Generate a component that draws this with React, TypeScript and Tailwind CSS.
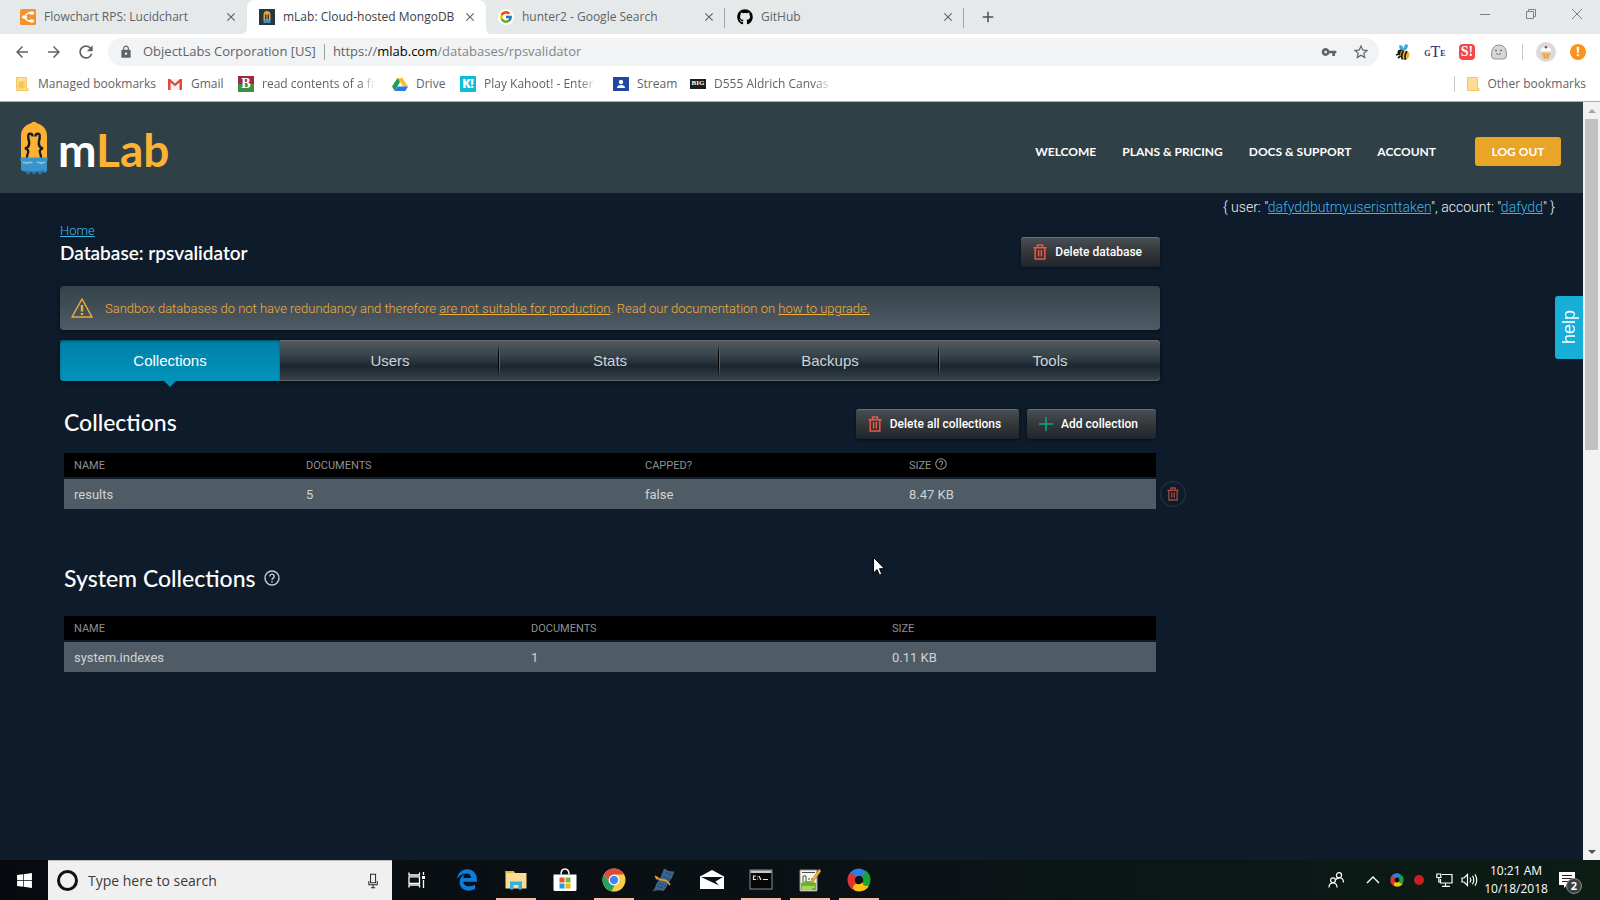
import React from "react";
import { FaGithub, FaWindows, FaEdgeLegacy } from "react-icons/fa6";
import { FcGoogle } from "react-icons/fc";
import {
  MdArrowBack,
  MdArrowForward,
  MdClose,
  MdAdd,
  MdLock,
  MdRefresh,
  MdStarBorder,
  MdVpnKey,
} from "react-icons/md";

/* ---------- Icons ---------- */

function TrashIcon({ className }: { className?: string }) {
  return (
    <svg viewBox="0 0 14 16" className={className} fill="none" stroke="currentColor" strokeWidth="1.5" aria-hidden="true">
      <path d="M4.5 3.5V1h5v2.5M.5 3.7h13M2.2 3.7V15h9.600V3.7M5.6 6v6.5M8.4 6v6.5" />
    </svg>
  );
}

function PlusIcon() {
  return (
    <svg viewBox="0 0 14 14" className="h-3.5 w-3.5" stroke="#0fa58a" strokeWidth="1.5" aria-hidden="true">
      <path d="M7 0v14M0 7h14" />
    </svg>
  );
}

function HelpCircle({ className }: { className?: string }) {
  return (
    <svg viewBox="0 0 16 16" className={className} fill="none" stroke="currentColor" strokeWidth="1.4" aria-hidden="true">
      <circle cx="8" cy="8" r="7" />
      <path d="M5.8 6.4a2.2 2.2 0 1 1 3.4 1.8c-.8.5-1.2.9-1.2 1.7M8 11v1.4" />
    </svg>
  );
}

function LucidIcon() {
  return (
    <svg viewBox="0 0 16 16" className="h-4 w-4" aria-hidden="true">
      <rect width="16" height="16" rx="1.5" fill="#f5922f" />
      <path d="M13 4H8.500L5.500 6v4l3 2H13" fill="none" stroke="#fff" strokeWidth="1.4" />
      <rect x="9.500" y="2.6" width="4.500" height="2.8" rx="1" fill="#fff" />
      <rect x="9.500" y="10.6" width="4.500" height="2.8" rx="1" fill="#fff" />
      <rect x="2" y="6.6" width="5" height="2.8" rx="1" fill="#fff" />
    </svg>
  );
}

function Mascot({ className }: { className?: string }) {
  return (
    <svg viewBox="0 0 28 54" className={className} aria-hidden="true">
      <path d="M1 37V15C1 8 5 4 11 2.200Q14-.5 17 2.200C23 4 27 8 27 15v22z" fill="#fdb234" />
      <path d="M.4 36.500h27.200v3.500H27v10q-2 3-4 .5l-3 3-3-3-3 3-3-3-3 3-3-3.500q-2 .5-4-1V40H.4z" fill="#3a93c9" />
      <path d="M2 51q3-2 5.500-1l6.500.5 6-.5 6.500-1-3.500 2-3 2.500-3-3-3 3-3-3-3 3-3-3.500z" fill="#2478ae" />
      <path d="M2.500 41.500h3l1 .8 2-.8h4M17 41.500h3l1 .8 2-.8h2.500" stroke="#8ec6e8" strokeWidth="1.500" fill="none" />
      <path
        d="M12.600 15.500q0-2.800-2.300-2.800T8.300 15q-.2 2.500.7 5.200.8 4-1.200 6-1.300 1.100-3 1.100 2.200.2 3.200 2 .8 2-.5 4.200-.6 1.200-.4 3M15.400 15.500q0-2.800 2.300-2.800t2 2.300q.2 2.500-.7 5.200-.8 4 1.200 6 1.300 1.100 3 1.100-2.200.2-3.200 2-.8 2 .5 4.200.6 1.200.4 3"
        fill="none"
        stroke="#161d2c"
        strokeWidth="2.400"
      />
    </svg>
  );
}

function MlabFavicon() {
  return (
    <svg viewBox="0 0 16 16" className="h-4 w-4" aria-hidden="true">
      <rect width="16" height="16" fill="#263840" />
      <path d="M4.500 11V6q0-4 3.500-4t3.500 4v5z" fill="#e8a63a" />
      <path d="M6.800 10.500V5.500M9.200 10.500V5.500" stroke="#1a222c" strokeWidth="1.200" />
      <path d="M4.500 11h7v2.500l-1.700.8-1.800-.8-1.800.8-1.700-.8z" fill="#3a93c9" />
    </svg>
  );
}

function FolderMark({ badge }: { badge?: boolean }) {
  return (
    <svg viewBox="0 0 16 16" className="h-4 w-4" aria-hidden="true">
      <path d="M2.500 1.500h10v11h1.500v2H2.500z" fill="#fddc93" stroke="#f7c65b" />
      {badge && <path d="M5 6h5v6H5zM6.700 6v6M8.400 6v6M5 8h5M5 10h5" fill="none" stroke="#f2bd4b" strokeWidth=".9" />}
    </svg>
  );
}

function GmailIcon() {
  return (
    <svg viewBox="0 0 16 16" className="h-4 w-4" aria-hidden="true">
      <rect x="1" y="3" width="14" height="11" fill="#f3f0ee" />
      <path d="M1 3h2l5 4.500L13 3h2v11h-2.500V6.500L8 10.200 3.500 6.500V14H1z" fill="#dd4b39" />
    </svg>
  );
}

function DriveIcon() {
  return (
    <svg viewBox="0 0 16 16" className="h-4 w-4" aria-hidden="true">
      <path d="M5.500 2h5L16 10.500h-5z" fill="#fbc02d" />
      <path d="M5.500 2 8 6l-5.300 9L0 10.500z" fill="#1e9e5a" />
      <path d="M5.500 10.500H16L13.300 15H2.700z" fill="#2f77e0" />
    </svg>
  );
}

function LetterTile({ label, className }: { label: string; className: string }) {
  return <span className={`flex h-4 w-4 items-center justify-center overflow-hidden text-white ${className}`}>{label}</span>;
}

function StreamIcon() {
  return (
    <svg viewBox="0 0 16 16" className="h-4 w-4" aria-hidden="true">
      <rect y="1" width="16" height="14" fill="#1f47a6" />
      <circle cx="8" cy="6" r="2.200" fill="#fff" />
      <path d="M4 12q0-3 4-3t4 3z" fill="#fff" />
    </svg>
  );
}

function BeeIcon() {
  return (
    <svg viewBox="0 0 16 18" className="h-[18px] w-4" aria-hidden="true">
      <path d="M8 8Q3 5 4.500 2 8 2 9 6 9-.5 13 2q0 4-4 6z" fill="#35a9e0" />
      <circle cx="5.500" cy="9.500" r="3" fill="#1a1a1a" />
      <path d="M6 8q7-2 8.500 3 0 6-6 6-5-2-2.500-9z" fill="#f0b429" />
      <path d="M8.500 8q-3 4-1 8.500M12 8.200q-3 4-1.500 8.500M1 12l3-1M3 15l2.500-2" stroke="#1a1a1a" strokeWidth="1.700" fill="none" />
    </svg>
  );
}

function GhostIcon() {
  return (
    <svg viewBox="0 0 18 18" className="h-[18px] w-[18px]" aria-hidden="true">
      <path d="M1.500 12q0-10 7.500-10t7.500 10q0 4-3 4h-9q-3 0-3-4z" fill="#d5d7d8" stroke="#8d9193" />
      <circle cx="6" cy="7.500" r="1" fill="#777" />
      <circle cx="11" cy="7.500" r="1" fill="#777" />
      <path d="M6 10.500q2.500 2 5 0" fill="none" stroke="#777" />
    </svg>
  );
}

function CupcakeAvatar() {
  return (
    <svg viewBox="0 0 20 20" className="h-5 w-5" aria-hidden="true">
      <circle cx="10" cy="10" r="10" fill="#dadcdc" />
      <path d="M4.500 10q0-5 5.500-5t5.500 5z" fill="#fff" />
      <path d="M4.500 10.500h11L12.500 17h-5z" fill="#f2b96a" />
      <path d="M4.200 10h11.600" stroke="#e8d9c0" strokeWidth="1.500" />
      <circle cx="10" cy="5.200" r="1.300" fill="#d3302f" />
      <path d="M8 11l.8 5.500M12 11l-.8 5.500" stroke="#d9943f" strokeWidth=".8" />
    </svg>
  );
}

function WarningIcon() {
  return (
    <svg viewBox="0 0 22 20" className="h-5 w-[22px]" fill="none" stroke="#e9ab3a" strokeWidth="1.500" strokeLinejoin="round" aria-hidden="true">
      <path d="M11 1 21 19H1z" />
      <path d="M11 7v6.500M11 15v2" strokeWidth="2.400" />
    </svg>
  );
}

function MicIcon() {
  return (
    <svg viewBox="0 0 12 18" className="h-[18px] w-3" fill="none" stroke="#2b2b2b" strokeWidth="1.200" aria-hidden="true">
      <path d="M3 1h6v10H3zM1 9v4.500h10V9M6 13.500V17M3.500 17h5" />
    </svg>
  );
}

function TaskViewIcon() {
  return (
    <svg viewBox="0 0 18 16" className="h-4 w-[18px]" fill="none" stroke="#fff" strokeWidth="1.300" aria-hidden="true">
      <path d="M1 .5v2.500h10.500V.5M1 4.800h10.500v6.500H1zM1 15.500V13h10.500v2.500M15.500 0v3M15.500 8v8" />
      <path d="M14 4h3v3h-3z" fill="#fff" stroke="none" />
    </svg>
  );
}

function ExplorerIcon() {
  return (
    <svg viewBox="0 0 24 24" className="h-6 w-6" aria-hidden="true">
      <path d="M1.500 3h8l1.500 2h11.500v15.500h-21z" fill="#fbdc90" />
      <path d="M1.500 3h8l1 2h-9z" fill="#e9b63e" />
      <path d="M6 21.500v-8h12v8h-3.500V17h-5v4.500z" fill="#36b0e4" />
    </svg>
  );
}

function StoreIcon() {
  return (
    <svg viewBox="0 0 24 24" className="h-6 w-6" aria-hidden="true">
      <path d="M.5 6.500h23v15q0 1.500-1.500 1.500H2q-1.500 0-1.500-1.500z" fill="#fff" />
      <path d="M8 6.500q0-5.500 4-5.500t4 5.500" fill="none" stroke="#fff" strokeWidth="1.500" />
      <path d="M6.500 9.500h5v5h-5z" fill="#e8562a" />
      <path d="M12.500 9.500h5v5h-5z" fill="#7db52b" />
      <path d="M6.500 15.500h5v5h-5z" fill="#1f9fe0" />
      <path d="M12.500 15.500h5v5h-5z" fill="#f5b01c" />
    </svg>
  );
}

function ChromeIcon() {
  return (
    <svg viewBox="0 0 24 24" className="h-6 w-6" aria-hidden="true">
      <circle cx="12" cy="12" r="11.500" fill="#f9cf48" />
      <path d="M2.040 6.250 7.300 14.700 12.500 17.500 9.500 23.200A11.500 11.500 0 0 1 2.040 6.250z" fill="#1fa463" />
      <path d="M2.040 6.250A11.500 11.500 0 0 1 22 6.500H12L7 14z" fill="#dd4b3e" />
      <circle cx="12" cy="12" r="5.400" fill="#fff" />
      <circle cx="12" cy="12" r="4.200" fill="#4587f0" />
    </svg>
  );
}

function NotebookIcon() {
  return (
    <svg viewBox="0 0 24 24" className="h-6 w-6" aria-hidden="true">
      <path d="M13 .5q5 3.500 10.500 3-2 7-6.500 12-1 4-4.500 7.500-5.500-1.500-11 .5 2.500-3 4-8Q10.500 9 13 .5z" fill="#3d658c" />
      <path d="M14 4l6 3M8 15l7 3M12 8l7 4M6 18l6 2" stroke="#264766" fill="none" />
      <path d="M4 8q4 4 8 4t7 5" fill="none" stroke="#eba32c" strokeWidth="1.600" />
      <circle cx="6" cy="10" r="1.500" fill="#eba32c" />
    </svg>
  );
}

function MailIcon() {
  return (
    <svg viewBox="0 0 24 24" className="h-6 w-6" aria-hidden="true">
      <path d="M0 8.500 12 2l12 6.500V21H0z" fill="#fff" />
      <path d="M1 9h22l-7.500 4.500 3.500 4z" fill="#0c1318" />
    </svg>
  );
}

function TerminalIcon() {
  return (
    <svg viewBox="0 0 24 24" className="h-6 w-6" aria-hidden="true">
      <rect x="1" y="2" width="22" height="19" fill="#050505" stroke="#8b8f93" />
      <path d="M1.500 2.500h21v2.500h-21z" fill="#c4c8cb" />
      <path d="M7 8H4.500v3.500H7M8.500 8.500v.8M8.500 10.800v.8M10 8l2 4M14 11.500h5" fill="none" stroke="#e4e4e4" strokeWidth="1.200" />
    </svg>
  );
}

function NotepadIcon() {
  return (
    <svg viewBox="0 0 24 24" className="h-6 w-6" aria-hidden="true">
      <path d="M2 2h17v21H2z" fill="#f6f8ef" stroke="#8d9186" />
      <path d="M3 15q8-4 15 0v7H3z" fill="#66b33a" />
      <path d="M4 19h13M4 21h10" stroke="#c7e04f" strokeWidth="1.300" />
      <path d="M5 14V8h3v6M10 11h2M13 11h2M4 4.500h13" stroke="#4b4b4b" fill="none" />
      <path d="M21 1l2 2-8.500 12-2 .8.300-2.300z" fill="#f0b13c" stroke="#a3702a" strokeWidth=".6" />
    </svg>
  );
}

function SwirlIcon({ className }: { className?: string }) {
  return (
    <svg viewBox="0 0 24 24" className={className} aria-hidden="true">
      <path d="M1.500 7Q5 .5 12 .5q4 0 6 2.500 1 4-2.500 5.500-4-2-7 1.500Q6 13 3 11 1 9 1.500 7z" fill="#2f7ee6" />
      <path d="M17 1.500q6.500 3.500 6.500 10.500 0 4-2.500 6-4 1-5.500-2.500 2-4-1.500-7 4-.500 4-4 0-2-1-3z" fill="#17a535" />
      <path d="M22.500 17Q19 23.500 12 23.500q-4 0-6-2.500-1-4 2.500-5.500 4 2 7-1.500.5 4 4 4 2 0 3-1z" fill="#f8c414" />
      <path d="M7 22.500Q.5 19 .5 12q0-4 2.500-6 4-1 5.500 2.500-2 4 1.500 7-4 .500-4 4 0 2 1 3z" fill="#e2342c" />
      <circle cx="12" cy="12" r="3.800" fill="#0b1114" />
    </svg>
  );
}

function PeopleIcon() {
  return (
    <svg viewBox="0 0 16 16" className="h-4 w-4" fill="none" stroke="#fff" strokeWidth="1.200" aria-hidden="true">
      <circle cx="11" cy="3.300" r="2.600" />
      <circle cx="5" cy="8.300" r="2.400" />
      <path d="M1 15.500q0-4.500 4-4.500t4 4.500M8 7.500q3-3.500 6.500-.5 1 1.500 1 3.500" />
    </svg>
  );
}

function NetworkIcon() {
  return (
    <svg viewBox="0 0 17 14" className="h-3.5 w-[17px]" fill="none" stroke="#fff" strokeWidth="1.200" aria-hidden="true">
      <path d="M6 1.500h10v8.500H4.500V6M9.500 10v3M6 13.300h8M.8 1h4v3.500h-4zM2.800 4.500V9H4" />
    </svg>
  );
}

function SoundIcon() {
  return (
    <svg viewBox="0 0 17 14" className="h-3.5 w-[17px]" fill="none" stroke="#fff" strokeWidth="1.200" aria-hidden="true">
      <path d="M1 5h2l3.500-3.500v11L3 9H1zM9 4.500q1.500 2.500 0 5M11.500 2.800q2.500 4.200 0 8.400M14 1.200q3.500 5.800 0 11.600" />
    </svg>
  );
}

/* ---------- Browser chrome ---------- */

const browserTabs = [
  { title: "Flowchart RPS: Lucidchart", icon: <LucidIcon />, active: false, divider: false },
  { title: "mLab: Cloud-hosted MongoDB", icon: <MlabFavicon />, active: true, divider: false },
  { title: "hunter2 - Google Search", icon: <FcGoogle className="h-4 w-4 rounded-full bg-white p-px" />, active: false, divider: true },
  { title: "GitHub", icon: <FaGithub className="h-4 w-4 text-black" />, active: false, divider: true },
];

function TabStrip() {
  return (
    <div className="flex h-[34px] items-stretch bg-[#e5e9e9] pl-2">
      {browserTabs.map((t) => (
        <div
          key={t.title}
          className={
            t.active
              ? "relative flex w-[239px] items-center gap-1.5 rounded-t-lg bg-white pr-2 pl-3 text-[#3c4043]"
              : "relative flex w-[239px] items-center gap-1.5 pr-2 pl-3 text-[#5f6368]"
          }
        >
          {t.active && (
            <>
              <svg viewBox="0 0 6 6" className="absolute right-full bottom-0 h-1.5 w-1.5" aria-hidden="true">
                <path d="M6 0v6H0q6 0 6-6z" fill="#fff" />
              </svg>
              <svg viewBox="0 0 6 6" className="absolute bottom-0 left-full h-1.5 w-1.5" aria-hidden="true">
                <path d="M0 0v6h6Q0 6 0 0z" fill="#fff" />
              </svg>
            </>
          )}
          <span className="mr-0.5 shrink-0">{t.icon}</span>
          <span className="flex-1 text-xs whitespace-nowrap">{t.title}</span>
          <button aria-label={`Close ${t.title}`} className="flex h-4 w-4 items-center justify-center text-[#5f6368]">
            <MdClose className="h-3.5 w-3.5" />
          </button>
          {t.divider && <span className="absolute top-2 right-0 h-5 w-px bg-[#a0a4a6]" />}
        </div>
      ))}
      <button aria-label="New tab" className="ml-3 flex w-6 items-center justify-center text-[#4b4f53]">
        <MdAdd className="h-[18px] w-[18px]" />
      </button>
      <div className="ml-auto flex text-[#7c8080]">
        <button aria-label="Minimize" className="flex h-7 w-[46px] items-center justify-center">
          <svg viewBox="0 0 10 10" className="h-2.5 w-2.5" stroke="currentColor"><path d="M0 5.500h10" /></svg>
        </button>
        <button aria-label="Restore" className="flex h-7 w-[46px] items-center justify-center">
          <svg viewBox="0 0 10 10" className="h-2.5 w-2.5" fill="none" stroke="currentColor"><path d="M.5 2.500h7v7h-7zM2.500 2.500v-2h7v7h-2" /></svg>
        </button>
        <button aria-label="Close window" className="flex h-7 w-[46px] items-center justify-center">
          <svg viewBox="0 0 10 10" className="h-2.5 w-2.5" stroke="currentColor"><path d="M0 0l10 10M10 0 0 10" /></svg>
        </button>
      </div>
    </div>
  );
}

function Toolbar() {
  const tool = "flex h-7 w-8 items-center justify-center";
  return (
    <div className="flex h-9 items-center bg-white px-1.5 text-[#5f6368]">
      <button aria-label="Back" className={tool}><MdArrowBack className="h-[18px] w-[18px]" /></button>
      <button aria-label="Forward" className={tool}><MdArrowForward className="h-[18px] w-[18px]" /></button>
      <button aria-label="Reload" className={tool}><MdRefresh className="h-5 w-5" /></button>
      <div className="ml-1.5 flex h-7 flex-1 items-center rounded-full bg-[#f1f3f4] pr-0.5 pl-[11px] text-[13px]">
        <MdLock className="h-3.5 w-3.5" />
        <span className="ml-2.5">ObjectLabs Corporation [US]</span>
        <span className="mx-2 h-4 w-px bg-[#9a9da0]" />
        <span className="flex-1">
          https://<span className="text-black">mlab.com</span>
          <span className="text-[#80868b]">/databases/rpsvalidator</span>
        </span>
        <button aria-label="Saved passwords" className={tool}><MdVpnKey className="h-4 w-4" /></button>
        <button aria-label="Bookmark this page" className={tool}><MdStarBorder className="h-[18px] w-[18px]" /></button>
      </div>
      <div className="ml-2 flex items-center">
        <button aria-label="Bee extension" className={tool}><BeeIcon /></button>
        <button aria-label="GTE extension" className={tool}>
          <span className="flex items-end font-['Liberation_Serif',serif] text-[8px] leading-3 font-bold text-[#34346e]">
            G<span className="text-base leading-4 font-normal">T</span>E
          </span>
        </button>
        <button aria-label="S extension" className={tool}>
          <span className="flex h-4 w-4 items-center justify-center rounded-sm bg-[#f4454a] font-['Liberation_Serif',serif] text-sm font-bold text-white">S!</span>
        </button>
        <button aria-label="Ghost extension" className={tool}><GhostIcon /></button>
        <span className="mx-[7px] h-4 w-px bg-[#c3cccb]" />
        <button aria-label="Profile" className={tool}><CupcakeAvatar /></button>
        <button aria-label="Update available" className={tool}>
          <span className="flex h-4 w-4 items-center justify-center rounded-full bg-[#fb9322] text-xs font-bold text-white">!</span>
        </button>
      </div>
    </div>
  );
}

const fade = "[mask-image:linear-gradient(to_right,black_85%,transparent)]";

const bookmarks = [
  { title: "Managed bookmarks", icon: <FolderMark badge />, width: "w-[113px]" },
  { title: "Gmail", icon: <GmailIcon />, width: "w-[31px]" },
  {
    title: "read contents of a fil",
    icon: <LetterTile label="B" className="bg-linear-to-b from-[#a3273f] from-50% to-[#3f8f43] to-50% font-['Liberation_Serif',serif] text-sm font-bold" />,
    width: `w-[114px] ${fade}`,
  },
  { title: "Drive", icon: <DriveIcon />, width: "w-7" },
  {
    title: "Play Kahoot! - Enter",
    icon: <LetterTile label="K!" className="bg-[#10bcd4] text-xs font-black" />,
    width: `w-[113px] ${fade}`,
  },
  { title: "Stream", icon: <StreamIcon />, width: "w-[37px]" },
  {
    title: "D555 Aldrich Canvas",
    icon: <span className="flex h-2.5 w-4 items-center justify-center bg-[#1d1d1d] font-['Liberation_Serif',serif] text-[7px] font-bold text-white">BIG</span>,
    width: `w-[118px] ${fade}`,
  },
];

function BookmarksBar() {
  return (
    <div className="flex h-8 items-center gap-4 border-b border-[#a9acae] bg-white px-3.5 pb-[3px] text-xs text-[#5f6368]">
      {bookmarks.map((b) => (
        <a key={b.title} href="#" className="flex items-center gap-2">
          <span className="w-4 shrink-0">{b.icon}</span>
          <span className={`whitespace-nowrap ${b.width}`}>{b.title}</span>
        </a>
      ))}
      <span className="ml-auto flex items-center">
        <span className="mr-2.5 h-4 w-px bg-[#c3cccb]" />
        <a href="#" className="flex items-center gap-1.5">
          <FolderMark />
          <span>Other bookmarks</span>
        </a>
      </span>
    </div>
  );
}

/* ---------- mLab page ---------- */

function SiteHeader() {
  return (
    <header className="flex h-[91px] items-center justify-between bg-[#304047] pr-[22px] pl-5 font-[Lato,sans-serif]">
      <a href="#" className="flex items-center gap-2.5">
        <Mascot className="h-[54px] w-7" />
        <span className="pt-1 text-[46px] leading-none font-bold text-white">
          m<span className="text-[#fdb234]">Lab</span>
        </span>
      </a>
      <nav className="mt-2 flex items-center gap-[26px] text-xs font-bold text-white">
        <a href="#">WELCOME</a>
        <a href="#">PLANS &amp; PRICING</a>
        <a href="#">DOCS &amp; SUPPORT</a>
        <a href="#">ACCOUNT</a>
        <button className="ml-[13px] h-[29px] w-[86px] rounded-[3px] bg-[#eaa428]">LOG OUT</button>
      </nav>
    </header>
  );
}

function DarkButton({ icon, children }: { icon: React.ReactNode; children: React.ReactNode }) {
  return (
    <button className="flex h-[30px] items-center gap-2 rounded-[3px] border-t border-[#6a7176] bg-linear-to-b from-[#474e55] via-[#353738] to-[#1c262f] pr-[18px] pb-px pl-3 text-xs font-medium text-white shadow-[0_1px_3px_rgba(0,0,0,0.5)]">
      {icon}
      {children}
    </button>
  );
}

const pageTabs = ["Collections", "Users", "Stats", "Backups", "Tools"];

function PageTabs() {
  return (
    <div role="tablist" className="mt-2.5 flex h-[41px] rounded-[4px] bg-[linear-gradient(#555a60,#37434a_38%,#1b2630_64%,#2b373e_85%,#3b474d)] font-['Liberation_Sans',sans-serif] text-[15px] shadow-[0_1px_4px_rgba(0,0,0,0.6),inset_0_1px_0_#6b6e73,inset_0_-1px_0_#5a6468]">
      {pageTabs.map((t, i) => (
        <button
          key={t}
          role="tab"
          aria-selected={i === 0}
          className={
            i === 0
              ? "relative flex-1 rounded-l-[4px] bg-linear-to-b from-[#007fa8] to-[#0094bb] pt-0.5 text-white shadow-[inset_0_1px_2px_rgba(0,0,0,0.4)]"
              : "relative flex-1 pt-0.5 text-[#ced3d6]"
          }
        >
          {t}
          {i === 0 && (
            <svg viewBox="0 0 12 6" className="absolute top-full left-1/2 h-1.5 w-3 -translate-x-1/2" aria-hidden="true">
              <path d="M0 0h12L6 6z" fill="#0094bb" />
            </svg>
          )}
          {i > 0 && i < 4 && (
            <span className="absolute inset-y-1 right-0 w-0.5 border-l border-black bg-[#5a646a] [mask-image:linear-gradient(transparent,black_30%,black_70%,transparent)]" />
          )}
        </button>
      ))}
    </div>
  );
}

interface Column {
  label: string;
  width: string;
  help?: boolean;
}

function DataTable({ label, columns, row }: { label: string; columns: Column[]; row: string[] }) {
  return (
    <table aria-label={label} className="w-full table-fixed border-separate border-spacing-0 text-left">
      <thead>
        <tr className="bg-black text-[11px] text-[#8e9193]">
          {columns.map((c) => (
            <th key={c.label} scope="col" className={`h-6 px-2.5 pt-0.5 pb-0 font-normal ${c.width}`}>
              <span className="flex items-center gap-1">
                {c.label}
                {c.help && <HelpCircle className="mb-1 h-3 w-3" />}
              </span>
            </th>
          ))}
        </tr>
      </thead>
      <tbody>
        <tr className="text-[13px] text-[#cfd3d5]">
          {row.map((v) => (
            <td key={v} className="h-8 border-t-2 border-[#0e1b2a] bg-[#505c65] bg-clip-padding px-2.5 pt-0.5 pb-0">
              {v}
            </td>
          ))}
        </tr>
      </tbody>
    </table>
  );
}

function MlabPage() {
  return (
    <main className="relative min-h-0 flex-1 overflow-hidden bg-[#0e1b2a] font-[Roboto,sans-serif]">
      <SiteHeader />
      <p className="pt-1 pr-7 text-right text-sm leading-5 font-light text-[#f0f3f5]">
        {'{ user: "'}
        <a href="#" className="text-[#3cb6e6] underline">dafyddbutmyuserisnttaken</a>
        {'", account: "'}
        <a href="#" className="text-[#3cb6e6] underline">dafydd</a>
        {'" }'}
      </p>

      <div className="ml-[60px] max-w-[1100px]">
        <div className="mt-1 flex items-end justify-between">
          <div className="mb-0.5">
            <a href="#" className="block text-[13px] leading-5 font-light text-[#3cb6e6] underline">Home</a>
            <h1 className="font-[Lato,sans-serif] text-[19px] leading-6 font-semibold text-white">Database: rpsvalidator</h1>
          </div>
          <DarkButton icon={<TrashIcon className="h-4 w-3.5 text-[#ea5a47]" />}>Delete database</DarkButton>
        </div>

        <div className="mt-[19px] flex h-11 items-center gap-3 rounded-[4px] bg-linear-to-b from-[#34424a] to-[#505c65] px-[11px] text-[13px] font-light text-[#f0ae3a] shadow-[0_1px_4px_rgba(0,0,0,0.5)]">
          <WarningIcon />
          <p className="pt-0.5">
            Sandbox databases do not have redundancy and therefore{" "}
            <a href="#" className="underline">are not suitable for production</a>. Read our documentation on{" "}
            <a href="#" className="underline">how to upgrade.</a>
          </p>
        </div>

        <PageTabs />

        <section className="mt-7 px-1">
          <div className="mb-3.5 flex h-[30px] items-center justify-between">
            <h2 className="pb-1 font-[Lato,sans-serif] text-[23px] font-medium text-white">Collections</h2>
            <div className="flex gap-2">
              <DarkButton icon={<TrashIcon className="h-4 w-3.5 text-[#ea5a47]" />}>Delete all collections</DarkButton>
              <DarkButton icon={<PlusIcon />}>Add collection</DarkButton>
            </div>
          </div>
          <div className="relative">
            <DataTable
              label="Collections"
              columns={[
                { label: "NAME", width: "w-[232px]" },
                { label: "DOCUMENTS", width: "w-[339px]" },
                { label: "CAPPED?", width: "w-[264px]" },
                { label: "SIZE", width: "w-auto", help: true },
              ]}
              row={["results", "5", "false", "8.47 KB"]}
            />
            <button
              aria-label="Delete results"
              className="absolute bottom-0.5 left-full ml-1 flex h-[26px] w-[26px] items-center justify-center rounded-full border border-[#2b3842]"
            >
              <TrashIcon className="h-3.5 w-3 text-[#a8483f]" />
            </button>
          </div>
        </section>

        <section className="mt-14 px-1">
          <div className="mb-[21px] flex h-[30px] items-center gap-2 pb-1">
            <h2 className="font-[Lato,sans-serif] text-[23px] font-medium text-white">System Collections</h2>
            <HelpCircle className="h-4 w-4 text-[#c9cdd0]" />
          </div>
          <DataTable
            label="System Collections"
            columns={[
              { label: "NAME", width: "w-[457px]" },
              { label: "DOCUMENTS", width: "w-[361px]" },
              { label: "SIZE", width: "w-auto" },
            ]}
            row={["system.indexes", "1", "0.11 KB"]}
          />
        </section>
      </div>

      <button className="absolute top-[194px] right-0 flex h-[63px] w-7 items-center justify-center rounded-l-[3px] bg-[#17aed8] font-['Liberation_Sans',sans-serif] text-lg leading-none text-white">
        <span className="rotate-180 [writing-mode:vertical-rl]">help</span>
      </button>
    </main>
  );
}

function Scrollbar() {
  return (
    <div aria-hidden="true" className="flex w-[17px] flex-col items-center bg-[#f1f1f1]">
      <span className="flex h-[17px] items-center">
        <svg viewBox="0 0 8 4" className="h-1 w-2"><path d="M0 4 4 0l4 4z" fill="#a3a3a3" /></svg>
      </span>
      <span className="h-[331px] w-[13px] bg-[#c1c1c1]" />
      <span className="mt-auto flex h-[17px] items-center">
        <svg viewBox="0 0 8 4" className="h-1 w-2"><path d="M0 0l4 4 4-4z" fill="#505050" /></svg>
      </span>
    </div>
  );
}

/* ---------- Taskbar ---------- */

const apps = [
  { name: "Microsoft Edge", icon: <FaEdgeLegacy className="h-[22px] w-[22px] text-[#0a7ddc]" />, open: false },
  { name: "File Explorer", icon: <ExplorerIcon />, open: true },
  { name: "Microsoft Store", icon: <StoreIcon />, open: false },
  { name: "Google Chrome", icon: <ChromeIcon />, open: true },
  { name: "Notebook", icon: <NotebookIcon />, open: false },
  { name: "Mail", icon: <MailIcon />, open: false },
  { name: "Command Prompt", icon: <TerminalIcon />, open: true },
  { name: "Notepad++", icon: <NotepadIcon />, open: true },
  { name: "ShareX", icon: <SwirlIcon className="h-6 w-6" />, open: true },
];

function Taskbar() {
  const cell = "relative flex w-[49px] items-center justify-center";
  return (
    <footer className="flex h-10 items-stretch bg-linear-to-r from-[#070a0e] via-[#0b1316] via-60% to-[#0c1d14] text-white">
      <button aria-label="Start" className="flex w-12 items-center justify-center">
        <FaWindows className="h-[17px] w-[17px]" />
      </button>
      <label className="flex w-[344px] items-center gap-2.5 border-t border-[#b9b9b9] bg-[#f0f0f0] pr-3.5 pl-[9px]">
        <span className="h-[21px] w-[21px] shrink-0 rounded-full border-[3px] border-[#111]" />
        <input
          type="text"
          aria-label="Search"
          placeholder="Type here to search"
          className="w-full bg-transparent text-sm text-[#333] outline-none placeholder:text-[#3a3a3a] placeholder:opacity-100"
        />
        <MicIcon />
      </label>
      <button aria-label="Task view" className={cell}><TaskViewIcon /></button>
      <div className="ml-px flex">
        {apps.map((a) => (
          <button key={a.name} aria-label={a.name} className={cell}>
            {a.icon}
            {a.open && <span className="absolute bottom-0 h-0.5 w-10 bg-[#fbb8a8]" />}
          </button>
        ))}
      </div>
      <div className="ml-auto flex items-center gap-2">
        <button aria-label="People" className="mr-3.5"><PeopleIcon /></button>
        <button aria-label="Show hidden icons">
          <svg viewBox="0 0 14 8" className="h-2 w-3.5" fill="none" stroke="#fff" strokeWidth="1.400"><path d="M1 7l6-6 6 6" /></svg>
        </button>
        <SwirlIcon className="ml-0.5 h-3.5 w-3.5" />
        <span className="mr-1 ml-0.5 h-2.5 w-2.5 rounded-full bg-[#c9201f]" />
        <NetworkIcon />
        <SoundIcon />
        <div className="flex w-[60px] flex-col items-center text-xs leading-[18px] whitespace-nowrap">
          <span>10:21 AM</span>
          <span>10/18/2018</span>
        </div>
        <button aria-label="2 new notifications" className="relative mr-6 ml-1">
          <svg viewBox="0 0 18 16" className="h-4 w-[18px]" aria-hidden="true">
            <path d="M1 0h16v13H9l-3 3v-3H1z" fill="#fff" />
            <path d="M4 3.500h10M4 6.500h10M4 9.500h6" stroke="#222" strokeWidth="1.200" />
          </svg>
          <span className="absolute top-1.5 left-2 flex h-4 w-4 items-center justify-center rounded-full border border-[#8b8f8d] bg-[#3b3f3d] text-[11px] font-bold">2</span>
        </button>
      </div>
    </footer>
  );
}

export default function App() {
  return (
    <div className="relative flex h-screen flex-col overflow-hidden font-['Open_Sans',sans-serif]">
      <TabStrip />
      <Toolbar />
      <BookmarksBar />
      <div className="flex min-h-0 flex-1">
        <MlabPage />
        <Scrollbar />
      </div>
      <Taskbar />
      <svg viewBox="0 0 12 19" className="pointer-events-none absolute top-[557px] left-[873px] h-[19px] w-3" aria-hidden="true">
        <path d="M.5.5v15.500l3.600-3.400 2.400 5.600 2.400-1-2.400-5.500h5z" fill="#fff" stroke="#000" />
      </svg>
    </div>
  );
}
